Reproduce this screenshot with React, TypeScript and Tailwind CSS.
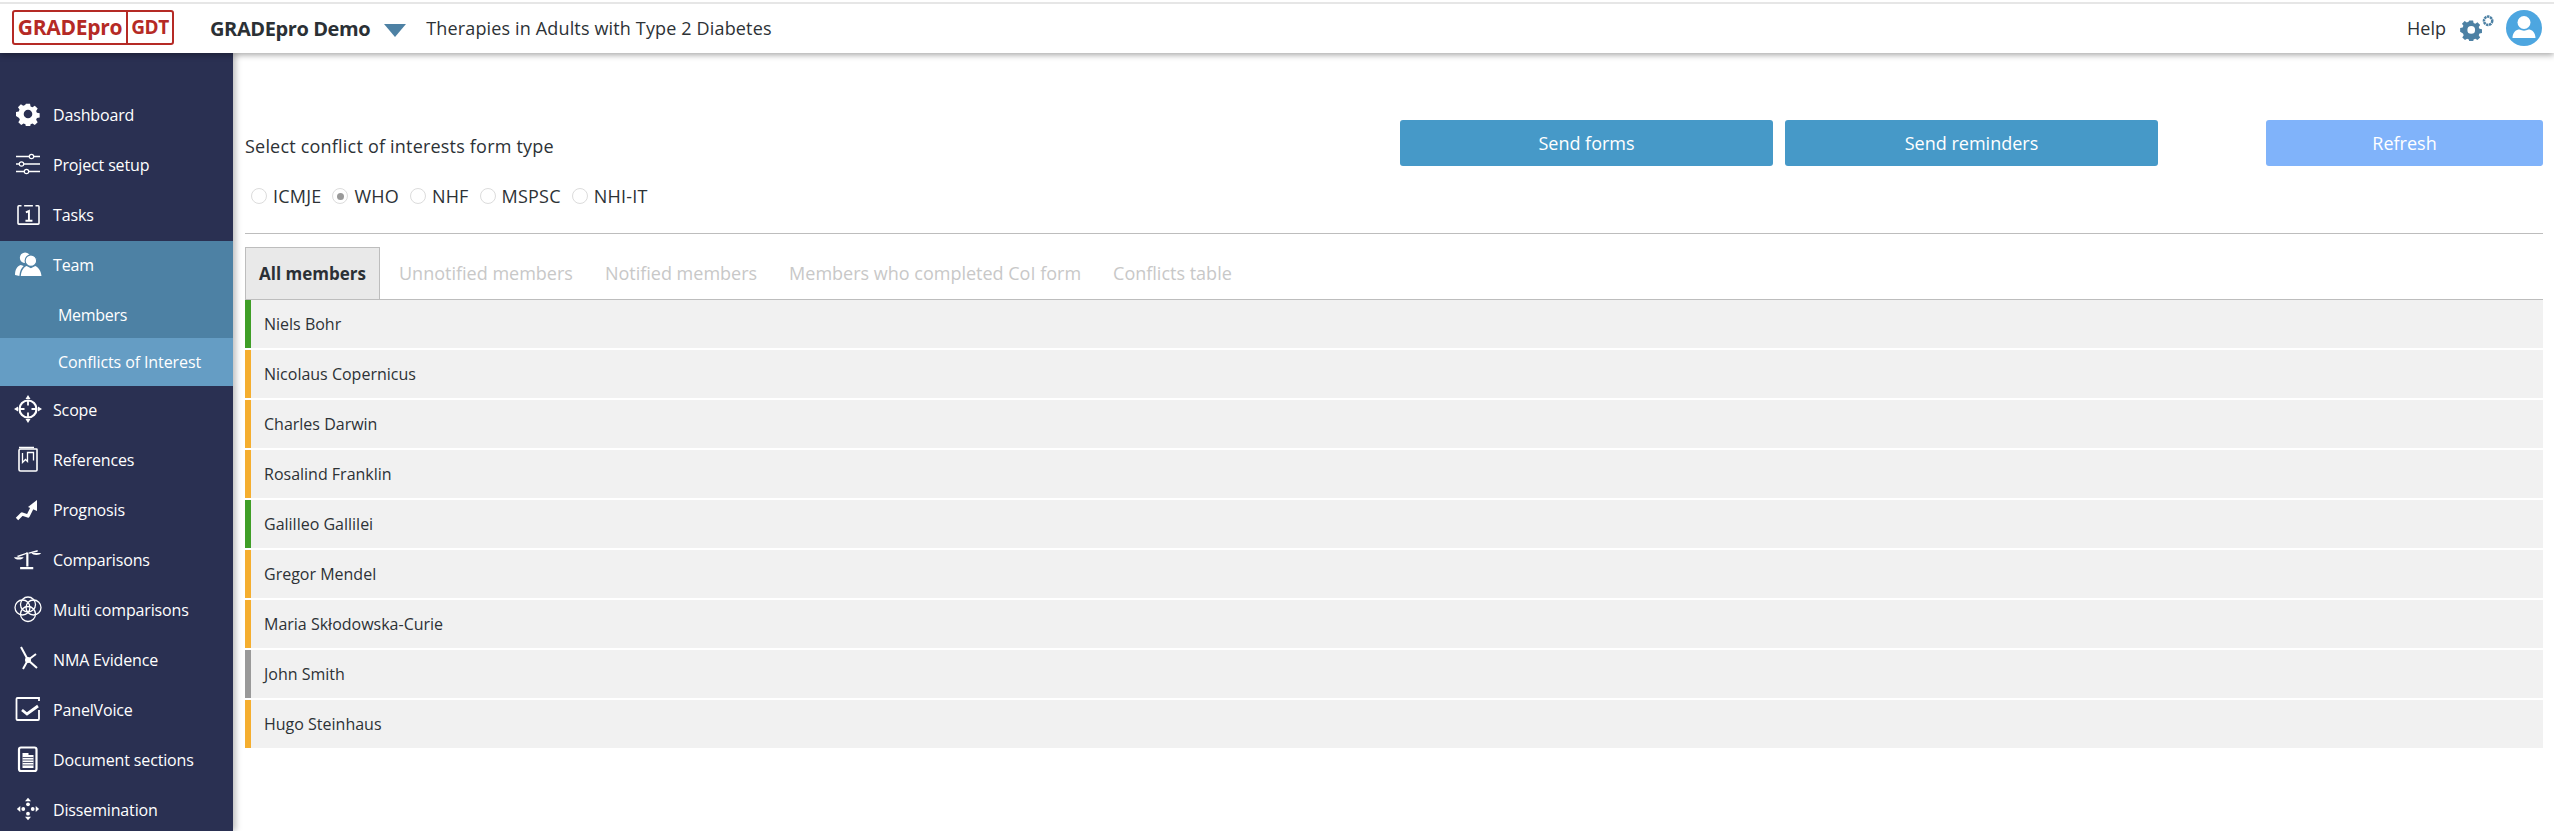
import React from 'react';

const font = { fontFamily: '"Open Sans", "Noto Sans", sans-serif' };

const I = ({ children }: { children: React.ReactNode }) => (
  <svg viewBox="0 0 28 28" className="w-[28px] h-[28px]" fill="none" stroke="white" strokeWidth={1.6}>
    {children}
  </svg>
);

const GearPath = "M11.6 2h4.8l.6 3.2 2.2.9 2.7-1.8 3.4 3.4-1.8 2.7.9 2.2 3.2.6v4.8l-3.2.6-.9 2.2 1.8 2.7-3.4 3.4-2.7-1.8-2.2.9-.6 3.2h-4.8l-.6-3.2-2.2-.9-2.7 1.8-3.4-3.4 1.8-2.7-.9-2.2L0 16.4v-4.8l3.2-.6.9-2.2-1.8-2.7 3.4-3.4 2.7 1.8 2.2-.9z";

const icons: Record<string, React.ReactNode> = {
  dashboard: (
    <svg viewBox="0 0 28 28" className="w-[24px] h-[24px]">
      <path d={GearPath} fill="white" fillRule="evenodd" />
      <circle cx="14" cy="14" r="5" fill="#2a3052" />
    </svg>
  ),
  setup: (
    <I>
      <path d="M2 6.500h13M20 6.500h6M2 14h3M10 14h16M2 21.500h8M15 21.500h11" strokeWidth={1.5} />
      <circle cx="17.500" cy="6.500" r="2.200" strokeWidth={1.2} />
      <circle cx="7.500" cy="14" r="2.200" strokeWidth={1.2} />
      <circle cx="12.500" cy="21.500" r="2.200" strokeWidth={1.2} />
    </I>
  ),
  tasks: (
    <svg viewBox="0 0 26 24" className="w-[23px] h-[21px]" fill="none" stroke="white">
      <path d="M5 2H2a1 1 0 0 0-1 1v19a1 1 0 0 0 1 1h22a1 1 0 0 0 1-1V3a1 1 0 0 0-1-1h-3M8 2h10" strokeWidth={1.8} />
      <path d="M10 9.500l3.500-1.500V19M9.500 19.200h8" strokeWidth={2.2} />
    </svg>
  ),
  team: (
    <svg viewBox="0 0 28 26" className="w-[27px] h-[25px]" fill="white">
      <circle cx="10.500" cy="6" r="5.500" />
      <path d="M0 24c0-6 2-9 6-10.500l3 1c-2.500 2-4 5-4.500 10.500z" />
      <circle cx="16.500" cy="9" r="6" stroke="#4d81a4" strokeWidth={1.200} />
      <path d="M6 25c.5-6 3-9 6-10.500l4.500 2.500 4.500-2.500c3 1.500 6 4.500 6.500 10.500z" />
    </svg>
  ),
  scope: (
    <I>
      <circle cx="14" cy="14" r="8.500" strokeWidth={2.200} />
      <path d="M14 5.500v5M14 17.500v5M5.500 14h5M17.500 14h5" strokeWidth={1.800} />
      <path d="M14 0l2.500 4h-5zM14 28l-2.500-4h5zM0 14l4-2.500v5zM28 14l-4 2.500v-5z" fill="white" stroke="none" />
    </I>
  ),
  references: (
    <I>
      <path d="M6.500 4h16a.5.5 0 0 1 .5.5V25a1 1 0 0 1-1 1H6.500A1.500 1.500 0 0 1 5 24.500v-19A1.500 1.500 0 0 1 6.500 4z" strokeWidth={1.600} />
      <path d="M5 2.500h15M8.500 8v9.500l3-3 2 2V7.500h6V15.500" strokeWidth={1.300} />
    </I>
  ),
  prognosis: (
    <I>
      <path d="M3 24l5-5 6 2 4-8" strokeWidth={3.400} strokeLinejoin="round" />
      <path d="M14 12l9-7v11z" fill="white" stroke="none" />
    </I>
  ),
  comparisons: (
    <svg viewBox="0 0 32 26" className="w-[30px] h-[25px]" fill="white">
      <path d="M14 5h2.500v16H14zM7 21.500h15V24H7z" />
      <path d="M3 9l12-4v1.500L5 10zM27 2l-10 3v1.500L27 4z" />
      <path d="M0 10.500h11c-1 3.500-10 3.500-11 0zM20 5.500h11c-1 3-10 3-11 0z" />
    </svg>
  ),
  multi: (
    <I>
      <circle cx="14" cy="9.500" r="7.500" strokeWidth={1.300} />
      <circle cx="8.500" cy="12.500" r="7.500" strokeWidth={1.300} />
      <circle cx="19.500" cy="12.500" r="7.500" strokeWidth={1.300} />
      <circle cx="14" cy="19" r="7.500" strokeWidth={1.300} />
    </I>
  ),
  nma: (
    <I>
      <path d="M7 2l7 13 9 8M14 15l8-6M14 15l-5 9" strokeWidth={2} />
      <circle cx="14" cy="15" r="3" fill="white" stroke="none" />
    </I>
  ),
  panel: (
    <I>
      <path d="M25 6V3H3.500a1 1 0 0 0-1 1v20a1 1 0 0 0 1 1H24a1 1 0 0 0 1-1v-9" strokeWidth={1.800} />
      <path d="M8 15l5 4 11-8" strokeWidth={2.800} />
    </I>
  ),
  document: (
    <svg viewBox="0 0 28 28" className="w-[28px] h-[28px]">
      <path d="M7 2.500h13.500a2 2 0 0 1 2 2V24a2 2 0 0 1-2 2H7a2 2 0 0 1-2-2V4.500a2 2 0 0 1 2-2z" fill="#2a3052" stroke="white" strokeWidth={2.200} />
      <path d="M8.500 8h6v2h5v13h-11z" fill="white" />
      <path d="M8.500 12.500h11M8.500 15h11M8.500 17.500h11M8.500 20h11" stroke="#2a3052" strokeWidth={0.800} />
    </svg>
  ),
  dissemination: (
    <svg viewBox="0 0 28 28" className="w-[24px] h-[24px]" fill="white">
      <circle cx="14" cy="8.500" r="2.200" />
      <circle cx="14" cy="19.500" r="2.200" />
      <circle cx="8.500" cy="14" r="2.200" />
      <circle cx="19.500" cy="14" r="2.200" />
      <path d="M14 1l3.500 4h-7zM14 27l-3.500-4h7zM1 14l4-3.500v7zM27 14l-4 3.500v-7z" />
    </svg>
  ),
};

const topItems = [
  { key: 'dashboard', label: 'Dashboard' },
  { key: 'setup', label: 'Project setup' },
  { key: 'tasks', label: 'Tasks' },
];

const bottomItems = [
  { key: 'scope', label: 'Scope' },
  { key: 'references', label: 'References' },
  { key: 'prognosis', label: 'Prognosis' },
  { key: 'comparisons', label: 'Comparisons' },
  { key: 'multi', label: 'Multi comparisons' },
  { key: 'nma', label: 'NMA Evidence' },
  { key: 'panel', label: 'PanelVoice' },
  { key: 'document', label: 'Document sections' },
  { key: 'dissemination', label: 'Dissemination' },
];

const NavItem = ({ icon, label }: { icon: string; label: string }) => (
  <div className="h-[50px] flex items-center pl-[14px] gap-[11px] text-white text-[16px] tracking-[-0.15px]">
    <span className="w-[28px] h-[28px] -mt-[4px] flex items-center justify-center">{icons[icon]}</span>
    <span className="-mt-[2px]">{label}</span>
  </div>
);

const members = [
  { name: 'Niels Bohr', color: 'bg-[#3f9e27]' },
  { name: 'Nicolaus Copernicus', color: 'bg-[#f5ae2f]' },
  { name: 'Charles Darwin', color: 'bg-[#f5ae2f]' },
  { name: 'Rosalind Franklin', color: 'bg-[#f5ae2f]' },
  { name: 'Galilleo Gallilei', color: 'bg-[#3f9e27]' },
  { name: 'Gregor Mendel', color: 'bg-[#f5ae2f]' },
  { name: 'Maria Skłodowska-Curie', color: 'bg-[#f5ae2f]' },
  { name: 'John Smith', color: 'bg-[#999999]' },
  { name: 'Hugo Steinhaus', color: 'bg-[#f5ae2f]' },
];

const radios = ['ICMJE', 'WHO', 'NHF', 'MSPSC', 'NHI-IT'];
const tabs = ['Unnotified members', 'Notified members', 'Members who completed CoI form', 'Conflicts table'];

export default function App() {
  return (
    <div style={font} className="h-[831px] w-full overflow-hidden bg-white flex flex-col text-[#2d3236]">
      <header className="relative z-20 h-[53px] shrink-0 pt-[2px] bg-white shadow-[0_2px_6px_rgba(0,0,0,0.35)]">
        <div className="h-full border-t-2 border-[#e6e6e6] flex items-center pl-[12px] pr-[12px]">
          <div className="-mt-[2px] h-[35px] w-[162px] border-2 border-[#b52a25] rounded-[3px] flex items-center text-[#b52a25] font-bold text-[21px] tracking-[-0.3px]">
            <span className="w-[114px] text-center border-r-2 border-[#b52a25] leading-[31px]">GRADEpro</span>
            <span className="flex-1 text-center text-[19px] tracking-[-0.5px]">GDT</span>
          </div>
          <span className="ml-[36px] text-[20px] font-bold tracking-[-0.4px] text-[#2b3035]">GRADEpro Demo</span>
          <svg viewBox="0 0 22 13" className="ml-[14px] mt-[3px] w-[22px] h-[13px]">
            <path d="M0 0h22L11 13z" fill="#4d81a4" />
          </svg>
          <span className="ml-[20px] text-[18px] tracking-[0.15px]">Therapies in Adults with Type 2 Diabetes</span>
          <span className="ml-auto text-[18px]">Help</span>
          <svg viewBox="0 0 36 28" className="ml-[14px] w-[35px] h-[27px] -mt-[2px]">
            <path d={GearPath} fill="#4d81a4" transform="translate(0 5) scale(0.82)" />
            <circle cx="11.500" cy="16.500" r="4" fill="white" />
            <circle cx="29" cy="7" r="4.300" fill="none" stroke="#4d81a4" strokeWidth={2.600} strokeDasharray="2.500 0.600" />
          </svg>
          <svg viewBox="0 0 36 36" className="ml-[11px] w-[36px] h-[36px] -mt-[1px]">
            <circle cx="18" cy="18" r="18" fill="#4da6e0" />
            <circle cx="18" cy="12.500" r="6.500" fill="white" />
            <path d="M6.500 28c0-6 4-8.500 7-8.500 3 1.500 6 1.500 9 0 3 0 7 2.500 7 8.500z" fill="white" />
          </svg>
        </div>
      </header>

      <div className="flex flex-1 min-h-0">
        <nav className="relative z-10 w-[233px] shrink-0 bg-[#2a3052] pt-[38px] shadow-[3px_0_6px_rgba(0,0,0,0.25)]">
          {topItems.map(i => <NavItem key={i.key} icon={i.key} label={i.label} />)}
          <div className="bg-[#4d81a4]">
            <NavItem icon="team" label="Team" />
            <div className="h-[47px] pl-[58px] flex items-center text-white text-[16px] tracking-[-0.3px]">Members</div>
            <div className="h-[48px] pl-[58px] flex items-center text-white text-[16px] tracking-[-0.1px] bg-[#659dc4]">Conflicts of Interest</div>
          </div>
          {bottomItems.map(i => <NavItem key={i.key} icon={i.key} label={i.label} />)}
        </nav>

        <main className="flex-1 min-w-0 pl-[12px] pr-[11px] pt-[67px]">
          <div className="h-[114px] border-b border-[#bdbdbd] flex">
            <div className="w-[1155px] shrink-0 pt-[13px]">
              <div className="text-[18px] leading-[26px] tracking-[0.2px]">Select conflict of interests form type</div>
              <div className="mt-[24px] h-[26px] pl-[6px] flex items-center text-[18px] tracking-[0.2px]">
                {radios.map(r => (
                  <label key={r} className="flex items-center gap-[6px] mr-[11px]">
                    <span className="w-[16px] h-[16px] rounded-full border border-[#dcdcdc] flex items-center justify-center">
                      {r === 'WHO' && <span className="w-[7px] h-[7px] rounded-full bg-[#9a9a9a]" />}
                    </span>
                    {r}
                  </label>
                ))}
              </div>
            </div>
            <div className="flex-1 flex h-[46px] text-white text-[18px]">
              <button className="w-[373px] rounded-[3px] bg-[#4699c8]">Send forms</button>
              <button className="ml-[12px] w-[373px] rounded-[3px] bg-[#4699c8]">Send reminders</button>
              <button className="ml-auto w-[277px] rounded-[3px] bg-[#80b3fa]">Refresh</button>
            </div>
          </div>

          <div className="mt-[13px] h-[53px] border-b border-[#bdbdbd] flex text-[18px]">
            <div className="w-[135px] h-[52px] border border-b-0 border-[#bdbdbd] bg-[#e9e9e9] font-bold text-[17px] text-[#2b3035] flex items-center justify-center">All members</div>
            <div className="flex pl-[19px] gap-[32px] items-center text-[#c8c8c8]">
              {tabs.map(t => <span key={t}>{t}</span>)}
            </div>
          </div>

          <div className="flex flex-col gap-[2px]">
            {members.map(m => (
              <div key={m.name} className="h-[48px] bg-[#f1f1f1] flex items-center text-[16px]">
                <span className={`w-[6px] h-full ${m.color}`} />
                <span className="ml-[13px] -mt-[1px]">{m.name}</span>
              </div>
            ))}
          </div>
        </main>
      </div>
    </div>
  );
}
